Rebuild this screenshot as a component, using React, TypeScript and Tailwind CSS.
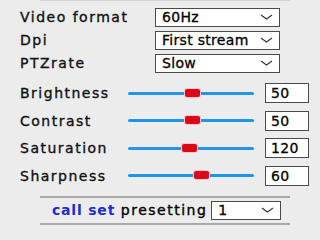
const font = { fontFamily: '"DejaVu Sans", Verdana, sans-serif' };

const selects = [
  { label: "Video format", value: "60Hz" },
  { label: "Dpi", value: "First stream" },
  { label: "PTZrate", value: "Slow" },
];

const sliders = [
  { label: "Brightness", value: "50", pos: 57 },
  { label: "Contrast", value: "50", pos: 57 },
  { label: "Saturation", value: "120", pos: 54 },
  { label: "Sharpness", value: "60", pos: 66 },
];

const Chevron = () => (
  <svg width="13" height="6" viewBox="0 0 13 6" className="shrink-0">
    <path d="M1 1 L6.5 5 L12 1" fill="none" stroke="#333" strokeWidth="1.1" />
  </svg>
);

const Select = ({ value, w }: { value: string; w: string }) => (
  <div
    className={`${w} h-[19px] flex items-center justify-between bg-white border border-[#4a4a4a] pl-[6px] pr-[6px] text-[14px] leading-none text-black`}
  >
    <span className="tracking-[0.3px] [-webkit-text-stroke:0.3px_#000]">{value}</span>
    <Chevron />
  </div>
);

const App = () => {
  return (
    <div
      className="w-[320px] h-[240px] bg-[#ececec] overflow-hidden flex flex-col"
      style={font}
    >
      <div className="h-px ml-[40px] w-[250px] bg-[#d4d4d4]" />
      {/* selects */}
      <div className="flex flex-col gap-[5px] pt-[7px] pl-[20px]">
        {selects.map((s) => (
          <div key={s.label} className="flex items-center h-[18px]">
            <div className="w-[135px] text-[14px] tracking-[1.5px] text-[#111] leading-none [-webkit-text-stroke:0.35px_#111]">
              {s.label}
            </div>
            <Select value={s.value} w="w-[125px]" />
          </div>
        ))}
      </div>

      {/* sliders */}
      <div className="flex flex-col gap-[7.6px] mt-[11px] pl-[20px]">
        {sliders.map((s) => (
          <div key={s.label} className="flex items-center h-[20px]">
            <div className="w-[108px] text-[14px] tracking-[1.5px] text-[#111] leading-none [-webkit-text-stroke:0.35px_#111]">
              {s.label}
            </div>
            <div className="relative w-[126px] h-[3px] rounded-full bg-[#2196e6]">
              <div
                className="absolute top-[-3px] w-[15px] h-[8px] bg-[#dc0818] rounded-[2px] ring-1 ring-[#f4c8cc]"
                style={{ left: s.pos }}
              />
            </div>
            <div className="ml-[11px] w-[44px] h-[20px] bg-white border border-[#4a4a4a] flex items-center pl-[5px] text-[14px] tracking-[0.3px] text-black leading-none [-webkit-text-stroke:0.3px_#000]">
              {s.value}
            </div>
          </div>
        ))}
      </div>

      {/* presetting */}
      <div className="mt-[10px] ml-[40px] w-[250px] h-[2px] bg-[#a9a9a9]" />
      <div className="flex items-center h-[19px] mt-[3px] pl-[52px]">
        <span className="text-[14px] leading-none font-bold text-[#1a2fd0] tracking-[0.8px] whitespace-pre">
          call set{" "}
        </span>
        <span className="text-[14px] leading-none tracking-[1.5px] text-black [-webkit-text-stroke:0.35px_#000]">
          presetting
        </span>
        <div className="ml-[4px]">
          <Select value="1" w="w-[70px]" />
        </div>
      </div>
      <div className="mt-[3px] ml-[40px] w-[250px] h-[2px] bg-[#a9a9a9]" />
    </div>
  );
};

export default App;
